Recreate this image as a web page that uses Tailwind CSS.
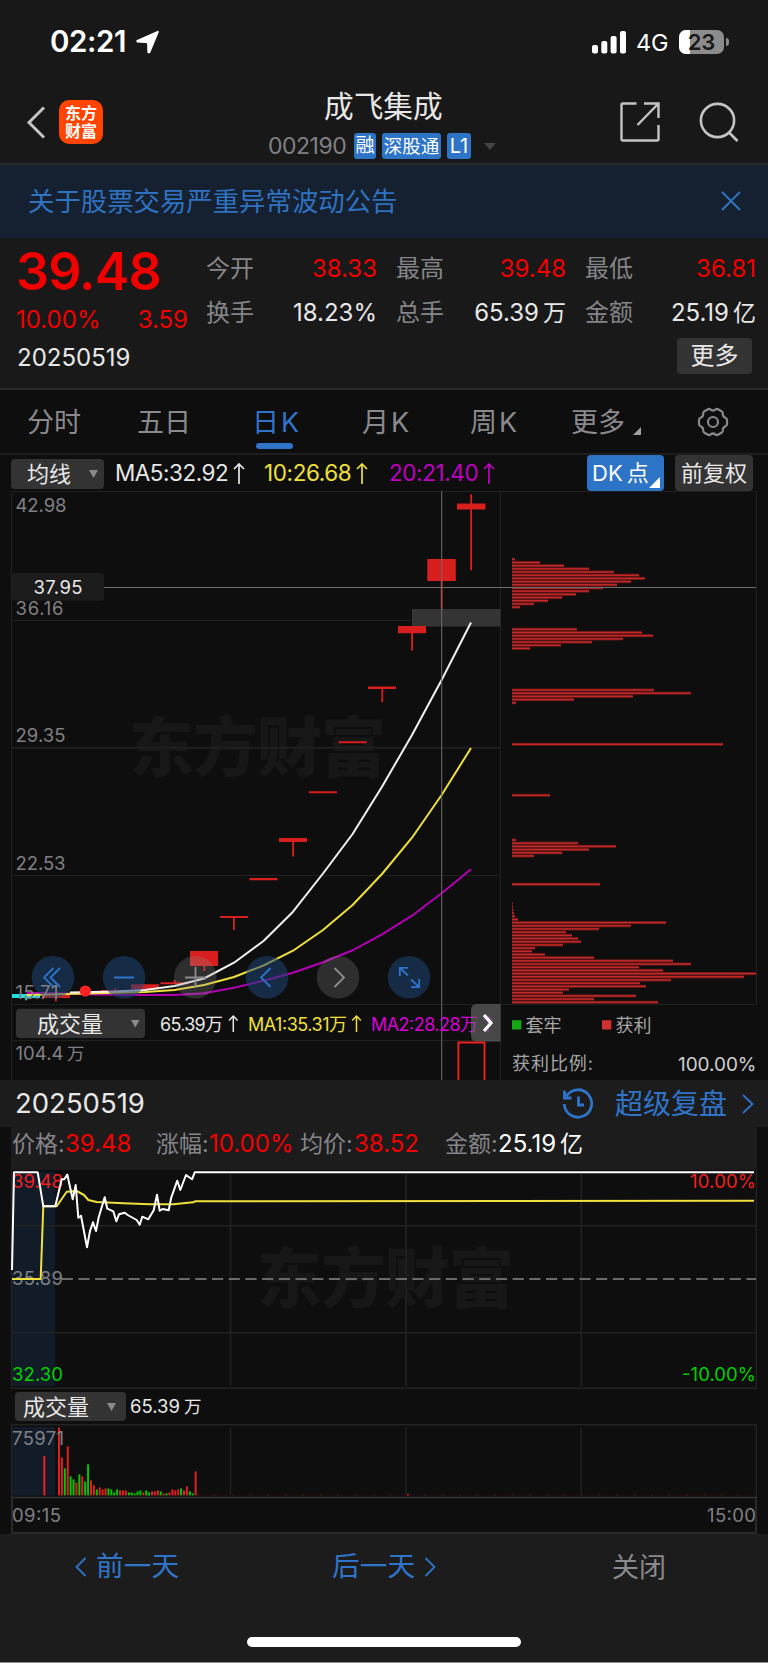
<!DOCTYPE html>
<html lang="zh-CN">
  <head>
    <meta charset="UTF-8" />
    <meta name="viewport" content="width=device-width, initial-scale=1.0" />
    <title>成飞集成 002190</title>
    <script src="https://cdn.jsdelivr.net/npm/@tailwindcss/browser@4"></script>
  </head>
  <body
    class="w-[768px] h-[1663px] overflow-hidden bg-[#0e0e0e] text-[#e8e8e8] font-['Inter','Noto_Sans_CJK_SC',sans-serif] leading-none whitespace-nowrap"
  >
    <!-- status bar -->
    <div class="h-[84px] bg-[#181818] flex items-center text-white">
      <div class="ml-[50px] w-[78px] text-[29.5px] font-semibold tracking-[-0.4px]">02:21</div>
      <svg class="ml-2 w-6 h-6" viewBox="0 0 24 24" fill="#fff" stroke="#fff" stroke-width="2" stroke-linejoin="round">
        <path d="M21.8 1.8L13.4 22.2L12.4 22.2L12 12.2L1.4 11.6L1.4 10.8Z" />
      </svg>
      <svg class="ml-[432px] w-[34px] h-[23px]" viewBox="0 0 34 23" fill="#fff">
        <rect x="0" y="14" width="6" height="8.5" rx="2" />
        <rect x="9.3" y="10" width="6" height="12.5" rx="2" />
        <rect x="18.6" y="5" width="6" height="17.5" rx="2" />
        <rect x="28" y="0" width="6" height="22.5" rx="2" />
      </svg>
      <div class="ml-[10px] mt-[2px] w-[33px] text-[23.5px] tracking-[-0.3px]">4G</div>
      <div class="relative ml-[10px] w-[45px] h-6 rounded-[7px] overflow-hidden bg-[#8c8c8c]">
        <div class="absolute inset-y-0 left-0 w-[11px] bg-white"></div>
        <div class="relative text-center leading-6 text-[22px] font-semibold text-[#181818]">23</div>
      </div>
      <div class="ml-[2px] w-[2.5px] h-2 rounded-r-full bg-[#8c8c8c]"></div>
    </div>

    <!-- nav bar -->
    <header class="h-[81px] bg-[#181818] border-b-2 border-[#282828] flex">
      <svg class="mt-[22px] ml-[26px] w-5 h-[34px]" viewBox="0 0 20 34" fill="none" stroke="#c4c4c4" stroke-width="3">
        <path d="M18 1.5 L3 16.500 L18 31.5" />
      </svg>
      <div
        class="mt-4 ml-[13px] w-[44px] h-[44px] rounded-[10px] bg-[#ff4400] text-white text-[16px] font-bold leading-[18.5px] text-center pt-[3.5px]"
      >
        <div>东方</div>
        <div>财富</div>
      </div>
      <div class="ml-[165px] w-[228px] flex flex-col">
        <div class="h-[46px] flex items-center pl-[56px] text-[29.7px]">成飞集成</div>
        <div class="h-[34px] flex items-center text-[#808084]">
          <span class="w-[86px] text-[23px] tracking-[-0.5px]">002190</span>
          <span class="w-[22px] h-[26px] rounded-[3px] bg-[#2e74c6] text-white text-[19px] leading-[26px] text-center">融</span>
          <span class="ml-[6px] w-[59px] h-[26px] rounded-[3px] bg-[#2e74c6] text-white text-[18.5px] leading-[26px] text-center">深股通</span>
          <span class="ml-[6px] w-[24px] h-[26px] rounded-[3px] bg-[#2e74c6] text-white text-[20px] leading-[26px] text-center">L1</span>
          <svg class="ml-[13px] w-3 h-[7px] shrink-0" viewBox="0 0 12 7" fill="#444"><path d="M0 0H12L6 7Z" /></svg>
        </div>
      </div>
      <svg class="mt-[17px] ml-[123px] w-[42px] h-[42px]" viewBox="0 0 42 42" fill="none" stroke="#c4c4c4" stroke-width="2.4">
        <path d="M17.500 2.500H4Q2.500 2.500 2.500 4V38Q2.500 39.500 4 39.500H38Q39.500 39.500 39.500 38V24" />
        <path d="M25 2.500H39.500V17M39 3L18.500 24" />
      </svg>
      <svg class="mt-[17px] ml-[38px] w-[42px] h-[42px]" viewBox="0 0 42 42" fill="none" stroke="#c4c4c4" stroke-width="2.6">
        <circle cx="18.500" cy="19.500" r="16.600" />
        <path d="M29.500 31L38.500 40" />
      </svg>
    </header>

    <!-- announcement -->
    <div class="h-[73px] bg-[#152130] flex items-center justify-between pl-[28px] pr-[27px] text-[26.4px] text-[#2f72c0]">
      <span>关于股票交易严重异常波动公告</span>
      <svg class="w-[20px] h-[20px] mb-[2px]" viewBox="0 0 20 20" fill="none" stroke="#2f72c0" stroke-width="2"><path d="M1 1L19 19M19 1L1 19" /></svg>
    </div>

    <!-- quote -->
    <section class="h-[152px] bg-[#191919] border-b-2 border-[#282828] flex">
      <div class="ml-[16px] w-[190px]">
        <div class="mt-[9px] h-[50px] flex items-center text-[52px] font-semibold tracking-[-0.9px] text-[#f20000]">39.48</div>
        <div class="mt-[11px] h-6 w-[172px] flex items-center justify-between text-[24px] text-[#f20000]">
          <span>10.00%</span><span>3.59</span>
        </div>
        <div class="mt-[14px] h-6 flex items-center pl-px text-[24px]">20250519</div>
      </div>
      <div class="flex-1 pt-[9px] pr-3">
        <div class="grid grid-cols-[171px_170px_171px] gap-x-[19px] text-[24px]">
          <div class="h-[44px] flex items-center justify-between text-[#f20000]"><span class="text-[#85858a]">今开</span>38.33</div>
          <div class="h-[44px] flex items-center justify-between text-[#f20000]"><span class="text-[#85858a]">最高</span>39.48</div>
          <div class="h-[44px] flex items-center justify-between text-[#f20000]"><span class="text-[#85858a]">最低</span>36.81</div>
          <div class="h-[44px] flex items-center justify-between"><span class="text-[#85858a]">换手</span>18.23%</div>
          <div class="h-[44px] flex items-center justify-between"><span class="text-[#85858a]">总手</span><span>65.39<span class="ml-1 text-[23px]">万</span></span></div>
          <div class="h-[44px] flex items-center justify-between"><span class="text-[#85858a]">金额</span><span>25.19<span class="ml-1 text-[23px]">亿</span></span></div>
        </div>
        <div class="mt-[3px] ml-[471px] w-[75px] h-[36px] rounded bg-[#333] text-[24px] leading-[36px] text-center">更多</div>
      </div>
    </section>

    <!-- period tabs -->
    <nav class="h-[65px] border-b-2 border-[#1e1e1e] flex items-center text-[27px] text-[#8a8a8e]">
      <span class="ml-[27px] w-[110px] pt-px">分时</span>
      <span class="w-[115px] pt-px">五日</span>
      <span class="relative w-[110px] pt-px text-[#2f74c8]">日<span class="ml-[2px]">K</span>
        <span class="absolute left-[4px] top-[35px] w-[37px] h-[6px] rounded-full bg-[#2f74c8]"></span>
      </span>
      <span class="w-[108px] pt-px">月<span class="ml-[2px]">K</span></span>
      <span class="w-[101px] pt-px">周<span class="ml-[2px]">K</span></span>
      <span class="w-[62px] pt-px">更多</span>
      <svg class="w-2 h-2 mt-[19px]" viewBox="0 0 8 8" fill="#a0a0a4"><path d="M8 0V8H0Z" /></svg>
      <svg class="ml-[56px] w-[32px] h-[30px]" viewBox="0 0 32 30" fill="none" stroke="#8a8a8e" stroke-width="2.2">
        <path d="M11 2.2Q12.4 1.4 13.6 2.6Q16 4.4 18.4 2.6Q19.6 1.4 21 2.2L24.6 4.2Q26 5 25.8 6.6Q25.6 9.6 28.4 10.8Q30 11.4 30 13V17Q30 18.6 28.4 19.2Q25.6 20.4 25.8 23.4Q26 25 24.6 25.8L21 27.8Q19.6 28.6 18.4 27.4Q16 25.6 13.6 27.4Q12.4 28.6 11 27.8L7.4 25.8Q6 25 6.2 23.4Q6.4 20.4 3.6 19.2Q2 18.6 2 17V13Q2 11.4 3.6 10.8Q6.4 9.6 6.2 6.6Q6 5 7.4 4.2Z" />
        <circle cx="16" cy="15" r="5" />
      </svg>
    </nav>

    <!-- MA row -->
    <div class="h-[36px] flex items-center text-[22px]">
      <div class="ml-[11px] mt-[2px] w-[93px] h-[30px] rounded bg-[#333] flex items-center pl-4">
        均线
        <svg class="ml-[18px] w-[9px] h-2" viewBox="0 0 9 8" fill="#8a8a8e"><path d="M0 0H9L4.5 8Z" /></svg>
      </div>
      <span class="ml-[11px] w-[149px] flex items-center text-[22.5px] tracking-[-0.5px]">MA5:32.92<svg class="ml-[5px] w-[12px] h-[21px]" viewBox="0 0 12 21" fill="none" stroke="#e8e8e8" stroke-width="1.7"><path d="M6 21V1M1 6L6 1L11 6" /></svg></span>
      <span class="w-[125px] flex items-center text-[22.5px] tracking-[-0.4px] text-[#efe03c]">10:26.68<svg class="ml-[5px] w-[12px] h-[21px]" viewBox="0 0 12 21" fill="none" stroke="#efe03c" stroke-width="1.7"><path d="M6 21V1M1 6L6 1L11 6" /></svg></span>
      <span class="w-[198px] flex items-center text-[22.5px] tracking-[-0.4px] text-[#c000c0]">20:21.40<svg class="ml-[5px] w-[12px] h-[21px]" viewBox="0 0 12 21" fill="none" stroke="#c000c0" stroke-width="1.7"><path d="M6 21V1M1 6L6 1L11 6" /></svg></span>
      <div class="relative w-[77px] h-[36px] rounded bg-[#2e74c6] text-white leading-[36px] pl-[5px]">
        DK<span class="ml-1">点</span>
        <svg class="absolute right-1 bottom-[3px] w-[11px] h-[11px]" viewBox="0 0 11 11" fill="#fff"><path d="M11 0V11H0Z" /></svg>
      </div>
      <div class="ml-[11px] w-[78px] h-[36px] rounded bg-[#333] leading-[36px] text-center">前复权</div>
    </div>

    <!-- daily K chart, cost distribution, volume -->
    <svg class="block w-[768px] h-[589px]" viewBox="0 491 768 589">
      <text x="129" y="771" textLength="257" fill="#171717" class="text-[65px] font-black">东方财富</text>
      <g fill="none" stroke="#1f1f1f" stroke-width="1.2">
        <path d="M11.5 1080V491.5H756.5V1004.5H11.5M500.5 491V1080M12 620.5H500M12 875.5H500M12 1040.7H500" />
        <path d="M12 747.7H500" stroke-width="2" />
      </g>

      <rect x="412" y="609" width="88.500" height="17.500" fill="#343434" />
      <g fill="#d91e1e">
        <path d="M457 503.500h28.500v6h-28.500zM470.200 494.300h1.800v76h-1.800z" />
        <path d="M427.300 559h28.500v22h-28.500zM440.700 581h1.800v28h-1.800z" />
        <path d="M398 626h28v7.200h-28zM411.200 633h1.800v17.500h-1.800z" />
        <path d="M368 686.500h28v2.400h-28zM381.400 688h1.800v14.300h-1.800z" />
        <path d="M338.600 741.200h28v2h-28zM309 791.200h28v2h-28zM249.500 878h28v2.200h-28z" />
        <path d="M279 838h28v4h-28zM292.200 841h1.800v15.500h-1.800z" />
        <path d="M220 916h28v2h-28zM233 917h1.800v13h-1.800z" />
        <path d="M190 951h28v15h-28zM203.400 966h1.800v5h-1.800z" />
        <path d="M160.500 982.300h28v2h-28zM173.600 980h1.800v3h-1.800zM131 984.300h28v5h-28z" />
        <path d="M101 990h28v1.500h-28zM114.200 988h1.800v3h-1.800zM42 995h28v3h-28zM55 997h1.800v4.500h-1.800z" />
      </g>
      <path d="M12 994h28v4h-28zM25.200 997h1.800v3.300h-1.800z" fill="#20e0e0" />

      <g fill="none" stroke-width="2" stroke-linejoin="round">
        <polyline stroke="#b400b4" points="26.500,993 56,993 86,994.300 145,995 174.500,995 204,993.300 234,987.700 263.500,980.700 293,972.700 323,962.300 352.600,950.300 382,934.300 412,915.700 441.600,893.300 471,869.300" />
        <polyline stroke="#efe03c" points="26.500,995 86,993.500 145,992 174.500,990 204,985 234,977 263.500,965.500 293,950.700 323,930 352.600,905 382,874 412,837.700 441.600,795 471,748" />
        <polyline stroke="#f2f2f2" points="70,992.500 115,991.500 145,990 174.500,986 204,978.500 234,962.700 263.500,941 293,911.700 323,873.500 352.600,834 382,786.700 412,735 441.600,680 471,622.500" />
      </g>
      <circle cx="85.300" cy="991" r="5.600" fill="#ff2222" />

      <!-- cost distribution bars -->
      <g id="chips"></g>

      <!-- crosshair -->
      <path d="M104 587.500H756M441.700 491V1080" stroke="#6e6e6e" stroke-width="1" />
      <rect x="12" y="573" width="92" height="27.700" rx="3" fill="#1c1c1c" />
      <text x="33.500" y="594" textLength="49" fill="#e8e8e8" class="text-[18.5px]">37.95</text>

      <!-- chart controls -->
      <g fill="#1d4474" fill-opacity="0.55">
        <circle cx="53" cy="977.300" r="21.300" />
        <circle cx="124" cy="977.300" r="21.300" />
        <circle cx="267" cy="977.300" r="21.300" />
        <circle cx="409" cy="977.300" r="21.300" />
      </g>
      <g fill="#8a8a8a" fill-opacity="0.26">
        <circle cx="195.300" cy="977.300" r="21.300" />
        <circle cx="338" cy="977.300" r="21.300" />
      </g>
      <g fill="none" stroke="#2f74c8" stroke-width="1.8">
        <path d="M53.500 968L44 977.500L53.500 987M60 968L50.500 977.500L60 987M114 977.500H134M270.500 968L261 977.500L270.500 987" />
        <path d="M408 975.500L400 968M399.800 976V967.800H408M411 979.500L419 987M419.200 979V987.200H411" />
      </g>
      <g fill="none" stroke="#8e8e8e" stroke-width="1.8">
        <path d="M185 977.500H206M195.500 967V988M334.500 968L344 977.500L334.500 987" />
      </g>

      <g fill="#808084" class="text-[18.5px]">
        <text x="15.500" y="512" textLength="51">42.98</text>
        <text x="15.500" y="614.500" textLength="48">36.16</text>
        <text x="15.500" y="742.300" textLength="50">29.35</text>
        <text x="15.500" y="870" textLength="50">22.53</text>
        <text x="15.500" y="998.500" textLength="43">15.71</text>
        <text x="15.500" y="1060" textLength="48">104.4</text>
        <text x="67" y="1060" class="text-[17.5px]">万</text>
      </g>

      <!-- volume header -->
      <rect x="16" y="1008.700" width="129" height="29.300" rx="4" fill="#333" />
      <text x="37" y="1031.700" fill="#e8e8e8" class="text-[22px]">成交量</text>
      <path d="M131 1020h8.500l-4.250 7.500z" fill="#8a8a8e" />
      <g class="text-[18px]">
        <text x="160" y="1030.500" textLength="63" fill="#e8e8e8">65.39万</text>
        <text x="248" y="1030.500" textLength="99" fill="#efe03c">MA1:35.31万</text>
        <text x="371" y="1030.500" textLength="107" fill="#d800d8">MA2:28.28万</text>
      </g>
      <g fill="none" stroke-width="1.500">
        <path d="M233.300 1032V1016M229 1020.500L233.300 1016L237.600 1020.500" stroke="#e8e8e8" />
        <path d="M356.500 1032V1016M352.200 1020.500L356.500 1016L360.800 1020.500" stroke="#efe03c" />
        <path d="M488 1032V1016M483.700 1020.500L488 1016L492.300 1020.500" stroke="#a000a0" />
      </g>
      <path d="M500.500 1004H477Q471 1004 471 1010V1035.500Q471 1041.500 477 1041.500H500.500Z" fill="#6e6e6e" fill-opacity="0.6" />
      <path d="M484 1015L491 1023L484 1031" fill="none" stroke="#fff" stroke-width="3.200" />
      <path d="M458.400 1080V1042.500H484.500V1080" fill="none" stroke="#f02020" stroke-width="1.900" />

      <!-- distribution legend -->
      <rect x="512" y="1020.200" width="9.300" height="9.300" fill="#14a814" />
      <rect x="602" y="1020.200" width="9.300" height="9.300" fill="#d03030" />
      <g fill="#a6a6a6" class="text-[18px]">
        <text x="525.500" y="1031.500">套牢</text>
        <text x="615.500" y="1031.500">获利</text>
        <text x="512" y="1070" textLength="81">获利比例:</text>
        <text x="678" y="1070.500" textLength="78.500" fill="#d0d0d0" class="text-[19px]">100.00%</text>
      </g>
    </svg>

    <!-- intraday replay panel -->
    <div class="h-[47px] bg-[#1c1c1c] flex items-center pl-[15px] pr-[14px]">
      <span class="text-[27.5px]">20250519</span>
      <svg class="ml-auto w-[32px] h-[32px]" viewBox="0 0 32 32" fill="none" stroke="#2f74c8" stroke-width="2.8">
        <path d="M4.500 8A13.700 13.700 0 1 1 2.300 16M2.500 2.500V10H9.500M16.500 8.500V17H22" />
      </svg>
      <span class="ml-[21px] text-[28px] text-[#2f74c8]">超级复盘</span>
      <svg class="ml-[15px] w-3 h-5" viewBox="0 0 12 20" fill="none" stroke="#2f74c8" stroke-width="1.800"><path d="M1 1L10.500 10L1 19" /></svg>
    </div>
    <div class="ml-[11px] w-[746px] h-[43px] bg-[#1c1c1c] flex items-center pb-[9px] pl-px text-[23px] text-[#85858a]">
      <span class="w-[53px]">价格:</span><span class="w-[91px] text-[24px] text-[#f20000]">39.48</span>
      <span class="w-[53px]">涨幅:</span><span class="w-[91px] text-[24px] text-[#f20000]">10.00%</span>
      <span class="w-[54px]">均价:</span><span class="w-[91px] text-[24px] text-[#f20000]">38.52</span>
      <span class="w-[53px]">金额:</span><span class="text-[24px] text-white">25.19<span class="ml-1 text-[23px]">亿</span></span>
    </div>

    <!-- intraday price -->
    <svg class="block w-[768px] h-[219px]" viewBox="0 1170 768 219">
      <text x="257" y="1301.500" textLength="257" fill="#171717" class="text-[65px] font-black">东方财富</text>
      <rect x="12" y="1172" width="43" height="214" fill="#121c28" />
      <g fill="none" stroke="#222" stroke-width="1.400">
        <path d="M11.500 1170V1388.200H756.300V1170M12 1225.700H756M12 1332.700H756" />
        <path d="M230.500 1172V1386M406 1172V1386M581.200 1172V1386" stroke-width="1.600" />
      </g>
      <path d="M61.700 1279H756" stroke="#6a6a6e" stroke-width="1.900" stroke-dasharray="11.200 5.500" />
      <g class="text-[18.500px]">
        <text x="12" y="1188.300" textLength="51" fill="#f02020">39.48</text>
        <text x="12" y="1285" textLength="51" fill="#808084">35.89</text>
        <text x="12" y="1381.300" textLength="51" fill="#00d000">32.30</text>
        <text x="690" y="1188.300" textLength="66" fill="#f02020">10.00%</text>
        <text x="682" y="1381.300" textLength="74" fill="#00d000">-10.00%</text>
      </g>
      <g fill="none" stroke-width="2" stroke-linejoin="round">
        <polyline stroke="#efe03c" points="12,1279 40.700,1279 43.300,1206.300 56.700,1206.300 66.700,1191.700 76.700,1191 84,1195 88.300,1200 96.700,1202 123.300,1203.300 150,1204.300 173.300,1204.300 193.300,1202.300 195,1201.300 754,1200.700" />
        <polyline stroke="#fff" points="12,1270 14,1172.300 37.700,1172.300 43.300,1206.300 55.300,1206.300 61.700,1179.300 64.300,1179.300 67.300,1174.500 72.700,1199.300 75.700,1185 78.300,1217.700 81,1215.700 87,1247.300 90,1231 93,1222.300 96,1231 98.700,1217.300 104.700,1197.300 107.300,1208.700 113.300,1211.300 116.300,1221.300 119,1214.300 124.700,1212.700 127.700,1215 136.700,1220 139.700,1224.700 142.300,1216.700 148.300,1219.300 153.700,1210.300 157,1194.700 159.700,1210.700 162.700,1209 168.700,1210.300 171.300,1197.300 177.300,1180.700 180.300,1190 186,1175 192,1179.300 194.700,1172.300 754,1172.300" />
      </g>
    </svg>
    <div class="h-[35px] flex items-center text-[22px]">
      <div class="ml-[15px] w-[111px] h-[29px] rounded bg-[#333] flex items-center pl-2">
        成交量
        <svg class="ml-[18px] w-[9px] h-2" viewBox="0 0 9 8" fill="#8a8a8e"><path d="M0 0H9L4.500 8Z" /></svg>
      </div>
      <span class="ml-[4px] text-[18.5px]">65.39<span class="ml-1 text-[17.5px]">万</span></span>
    </div>

    <!-- intraday volume -->
    <svg class="block w-[768px] h-[110px]" viewBox="0 1424 768 110">
      <rect x="12" y="1427" width="43" height="68.500" fill="#121c28" />
      <g fill="none" stroke="#222" stroke-width="1.400">
        <path d="M11.500 1497V1424.700H756.300V1497M230.500 1427V1495M406 1427V1495M581.200 1427V1495" />
        <rect x="12" y="1497.500" width="744" height="35.500" stroke="#333" stroke-width="1.600" />
      </g>
      <g id="volume"></g>
      <g fill="#808084" class="text-[18.5px]">
        <text x="12" y="1445" textLength="52">75971</text>
        <text x="12" y="1522.300" textLength="49">09:15</text>
        <text x="707" y="1522.300" textLength="49">15:00</text>
      </g>
    </svg>

    <!-- bottom actions -->
    <footer class="h-[129px] bg-[#1c1c1c] border-b border-[#8a8a8a]">
      <div class="h-[66px] flex items-center text-[27.7px] text-[#2f74c8]">
        <svg class="ml-[75px] w-3 h-5" viewBox="0 0 12 20" fill="none" stroke="#2f74c8" stroke-width="1.800"><path d="M10.500 1L1.500 10L10.500 19" /></svg>
        <span class="ml-[9px] w-[236px]">前一天</span>
        <span class="w-[92px]">后一天</span>
        <svg class="w-3 h-5" viewBox="0 0 12 20" fill="none" stroke="#2f74c8" stroke-width="1.800"><path d="M1.500 1L10.500 10L1.500 19" /></svg>
        <span class="ml-[176px] text-[27px] text-[#8a8a8e]">关闭</span>
      </div>
      <div class="mt-[37px] ml-[246.500px] w-[274px] h-[10px] rounded-full bg-white"></div>
    </footer>

    <script>
      const svgNS = "http://www.w3.org/2000/svg";

      function addRect(parent, x, y, width, height, fill) {
        const rect = document.createElementNS(svgNS, "rect");
        rect.setAttribute("x", x);
        rect.setAttribute("y", y);
        rect.setAttribute("width", width);
        rect.setAttribute("height", height);
        rect.setAttribute("fill", fill);
        parent.appendChild(rect);
      }

      // [y of the first bar, bar lengths]
      const chipGroups = [
        [559.3, [3, 28, 52, 77, 102, 127, 133, 119, 105, 91, 77, 64, 50, 36, 22, 8]],
        [629.3, [65, 130, 141, 111, 80, 49, 18]],
        [690, [142, 179, 121, 62, 4]],
        [744.3, [211]],
        [795.3, [38]],
        [840, [4, 66, 104, 77, 50, 22]],
        [884.3, [88]],
        [903.5, [0.7, 1, 1.3, 2, 3, 6]],
        [922.6, [154, 119, 87, 54, 60, 66, 69, 51, 23, 20, 33, 82, 161, 179, 127, 151, 244, 232, 159, 128, 134, 57, 51, 124, 82, 146]],
      ];
      const chips = document.getElementById("chips");
      chipGroups.forEach(([top, lengths]) => {
        lengths.forEach((length, i) => {
          const y = top + i * 3.187;
          addRect(chips, 512, y - 1.6, length, 3.2, "#5c1616");
          addRect(chips, 512, y - 0.75, length, 1.5, "#c42828");
        });
      });

      // minute volume: height and direction
      const volumes = "68r 38r 27g 49r 19g 16g 13r 21g 19r 14g 31g 15r 10r 6g 8r 6r 7r 7g 6g 3g 6g 5r 5r 5r 3g 3g 2g 4g 5g 3r 5g 3g 4r 4r 5r 4g 2r 2g 3r 6r 5r 6r 7g 5r 9r 4g 2g 24r".split(" ");
      const volume = document.getElementById("volume");
      addRect(volume, 43.3, 1456, 2, 39.4, "#f02020");
      volumes.forEach((item, i) => {
        const height = parseInt(item);
        const fill = item.endsWith("r") ? "#e02020" : "#00c800";
        addRect(volume, 58 + i * 2.907, 1495.4 - height, 2, height, fill);
      });
      for (let i = 48; i < 240; i++) {
        addRect(volume, 58 + i * 2.907, 1494.6, 1.8, 0.8, i % 6 === 0 ? "#7a1414" : "#3a1010");
      }
      addRect(volume, 407, 1493.8, 2, 1.6, "#c02020");
    </script>
  </body>
</html>
